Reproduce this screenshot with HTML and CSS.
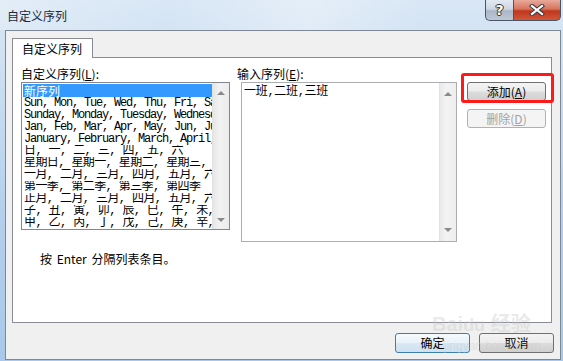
FILE: index.html
```html
<!DOCTYPE html>
<html lang="zh-CN">
  <head>
    <meta charset="UTF-8" />
    <title>自定义序列</title>
    <link rel="stylesheet" href="styles.css">
  </head>
  <body>
    <div class="window">
      <div class="titlebar">
        <div class="title">自定义序列</div>
        <div class="caption-buttons">
          <div class="cap help">?</div>
          <div class="cap close">
            <svg width="16" height="12" viewBox="0 0 16 12">
              <path d="M3 2 L13 10 M13 2 L3 10" stroke="#3a3f48" stroke-width="4.2" stroke-linecap="square" />
              <path d="M3 2 L13 10 M13 2 L3 10" stroke="#ffffff" stroke-width="2.2" stroke-linecap="square" />
            </svg>
          </div>
        </div>
      </div>

      <div class="client">
        <div class="tab">自定义序列</div>
        <div class="panel">
          <div class="cols">
            <div class="col-left">
              <div class="label">自定义序列(<u>L</u>):</div>
              <div class="listbox">
                <div class="rows">
                  <div class="row selected"><span>新序列</span></div>
                  <div class="row lat">Sun, Mon, Tue, Wed, Thu, Fri, Sat</div>
                  <div class="row lat">Sunday, Monday, Tuesday, Wednesday, Thursday</div>
                  <div class="row lat">Jan, Feb, Mar, Apr, May, Jun, Jul, Aug</div>
                  <div class="row lat">January, February, March, April, May</div>
                  <div class="row cjk">日, 一, 二, 三, 四, 五, 六</div>
                  <div class="row cjk">星期日, 星期一, 星期二, 星期三, 星期四</div>
                  <div class="row cjk">一月, 二月, 三月, 四月, 五月, 六月</div>
                  <div class="row cjk">第一季, 第二季, 第三季, 第四季</div>
                  <div class="row cjk">正月, 二月, 三月, 四月, 五月, 六月</div>
                  <div class="row cjk">子, 丑, 寅, 卯, 辰, 巳, 午, 未, 申</div>
                  <div class="row cjk">甲, 乙, 丙, 丁, 戊, 己, 庚, 辛, 壬</div>
                </div>
                <div class="scrollbar">
                  <span class="arrow up"></span>
                  <span class="arrow down"></span>
                </div>
              </div>
            </div>

            <div class="col-right">
              <div class="label shift">输入序列(<u>E</u>):</div>
              <div class="editbox">
                <div class="edit-text">一班,二班,三班</div>
                <div class="scrollbar light">
                  <span class="arrow up"></span>
                  <span class="arrow down"></span>
                </div>
              </div>
            </div>

            <div class="col-buttons">
              <div class="btn add">添加(<u>A</u>)<span class="mark"></span></div>
              <div class="btn disabled">删除(<u>D</u>)</div>
            </div>
          </div>

          <div class="note">按 Enter 分隔列表条目。</div>
        </div>

        <div class="footer">
          <div class="btn wide default">确定</div>
          <div class="btn wide">取消</div>
        </div>

        <div class="watermark">
          <div class="wm-logo">Bai<span>du</span> 经验</div>
          <div class="wm-url">jingyan.baidu.com</div>
        </div>
      </div>
    </div>
  </body>
</html>
```

FILE: styles.css
```css
body {
  margin: 0;
  width: 563px;
  height: 361px;
  overflow: hidden;
  font-family: "Noto Sans CJK SC", "Liberation Sans", sans-serif;
  font-size: 12px;
  color: #000;
}

.window {
  height: 361px;
  display: flex;
  flex-direction: column;
  background: linear-gradient(180deg, #d9e7f5 0%, #c6dbf0 30%, #b4cfec 60%, #a9c8ea 100%);
}

.titlebar {
  height: 30px;
  flex: none;
  display: flex;
  justify-content: space-between;
  align-items: flex-start;
  background: linear-gradient(100deg, rgba(255, 255, 255, 0.25) 0%, rgba(255, 255, 255, 0) 30%, rgba(255, 255, 255, 0.3) 55%, rgba(255, 255, 255, 0) 75%);
}

.title {
  padding: 9px 0 0 7px;
  line-height: 14px;
  color: #1e2a38;
}

.caption-buttons {
  display: flex;
  margin-right: 2px;
}

.cap {
  height: 20px;
  border: 1px solid #4a5564;
  border-top: none;
  display: flex;
  align-items: center;
  justify-content: center;
}

.help {
  width: 27px;
  border-right: none;
  border-radius: 0 0 0 5px;
  background: linear-gradient(180deg, #e3e9f1 0%, #cdd6e2 45%, #aab7c8 55%, #bcc8d7 100%);
  color: #fff;
  font-family: "DejaVu Sans", sans-serif;
  font-weight: bold;
  font-size: 14px;
  text-shadow: 0 0 1px #2c3440, 1px 0 0 #2c3440, -1px 0 0 #2c3440, 0 1px 0 #2c3440, 0 -1px 0 #2c3440;
}

.close {
  width: 46px;
  border-radius: 0 0 5px 0;
  background: linear-gradient(180deg, #e9aa9a 0%, #d8735c 45%, #c1361b 55%, #d0573a 100%);
}

.client {
  flex: 1;
  margin: 0 2px 1px 5px;
  border: 1px solid #7d8795;
  background: #f0f0f0;
  padding: 7px 8px 0 6px;
  position: relative;
}

.tab {
  width: 70px;
  height: 19px;
  line-height: 19px;
  padding-left: 9px;
  border: 1px solid #898c95;
  border-bottom: none;
  background: #fff;
  position: relative;
  z-index: 1;
  margin-bottom: -1px;
}

.panel {
  height: 256px;
  border: 1px solid #898c95;
  background: #fff;
  padding: 8px 0 0 8px;
}

.cols {
  display: flex;
  align-items: flex-start;
}

.label {
  line-height: 16px;
  height: 16px;
}

.label.shift {
  margin-left: -4px;
}

.col-left {
  width: 209px;
}

.listbox {
  height: 146px;
  border: 1px solid #828790;
  display: flex;
  overflow: hidden;
}

.rows {
  flex: 1;
  overflow: hidden;
  padding: 1px 0 0 1px;
}

.row {
  height: 12px;
  line-height: 12px;
  white-space: nowrap;
  overflow: hidden;
  font-family: "Liberation Mono", "Noto Sans CJK SC", monospace;
  font-size: 12px;
}

.row.selected {
  height: 13px;
  line-height: 13px;
  background: #3399ff;
  color: #fff;
  font-family: "Noto Sans CJK SC", sans-serif;
  padding-left: 1px;
}

.row.lat {
  letter-spacing: -1.2px;
  padding-left: 1px;
}

.row.cjk {
  letter-spacing: -0.6px;
  padding-left: 1px;
}

.scrollbar {
  width: 16px;
  flex: none;
  background: linear-gradient(90deg, #e6e6e6, #f2f2f2 40%, #ececec);
  border-left: 1px solid #e2e2e2;
  display: flex;
  flex-direction: column;
  justify-content: space-between;
  align-items: center;
  padding: 8px 0 7px;
}

.scrollbar.light {
  background: linear-gradient(90deg, #e9e9e9, #f3f3f3 40%, #eeeeee);
  padding: 9px 0 9px;
}

.arrow {
  width: 0;
  height: 0;
  border-left: 4px solid transparent;
  border-right: 4px solid transparent;
}

.arrow.up {
  border-bottom: 4px solid #8a8a8a;
}

.arrow.down {
  border-top: 4px solid #8a8a8a;
}

.col-right {
  margin-left: 11px;
  width: 216px;
}

.editbox {
  height: 158px;
  border: 1px solid #abadb3;
  display: flex;
  overflow: hidden;
}

.edit-text {
  flex: 1;
  padding: 2px 0 0 2px;
  line-height: 14px;
  font-family: "Liberation Mono", "Noto Sans CJK SC", monospace;
  letter-spacing: -0.3px;
}

.col-buttons {
  margin-left: 10px;
  padding-top: 16px;
  display: flex;
  flex-direction: column;
  gap: 8px;
}

.btn {
  width: 77px;
  height: 17px;
  line-height: 17px;
  text-align: center;
  border: 1px solid #707070;
  border-radius: 3px;
  background: linear-gradient(180deg, #f4f4f4 0%, #ebebeb 48%, #dcdcdc 52%, #d0d0d0 100%);
  position: relative;
}

.btn.disabled {
  border-color: #adb2b5;
  background: #f4f4f4;
  color: #a3a3a3;
}

.mark {
  position: absolute;
  left: -7px;
  top: -10px;
  width: 87px;
  height: 24px;
  border: 3px solid #ff1a1a;
  border-radius: 3px;
}

.note {
  margin: 10px 0 0 19px;
  line-height: 14px;
  word-spacing: 2px;
}

.footer {
  display: flex;
  justify-content: flex-end;
  gap: 9px;
  margin: 10px -2px 0 0;
}

.btn.wide {
  width: 73px;
  height: 18px;
  line-height: 18px;
}

.btn.default {
  border-color: #3c7fb1;
  background: linear-gradient(180deg, #f5fafd 0%, #e8f2f9 48%, #d8e8f4 52%, #cfe1ef 100%);
}

.watermark {
  position: absolute;
  left: 426px;
  top: 282px;
  color: rgba(200, 200, 200, 0.4);
  font-family: "Liberation Sans", "Noto Sans CJK SC", sans-serif;
  pointer-events: none;
}

.wm-logo {
  font-size: 20px;
  font-weight: bold;
  line-height: 22px;
}

.wm-logo span {
  font-size: 18px;
}

.wm-url {
  font-size: 12px;
  margin: 3px 0 0 12px;
}
```
